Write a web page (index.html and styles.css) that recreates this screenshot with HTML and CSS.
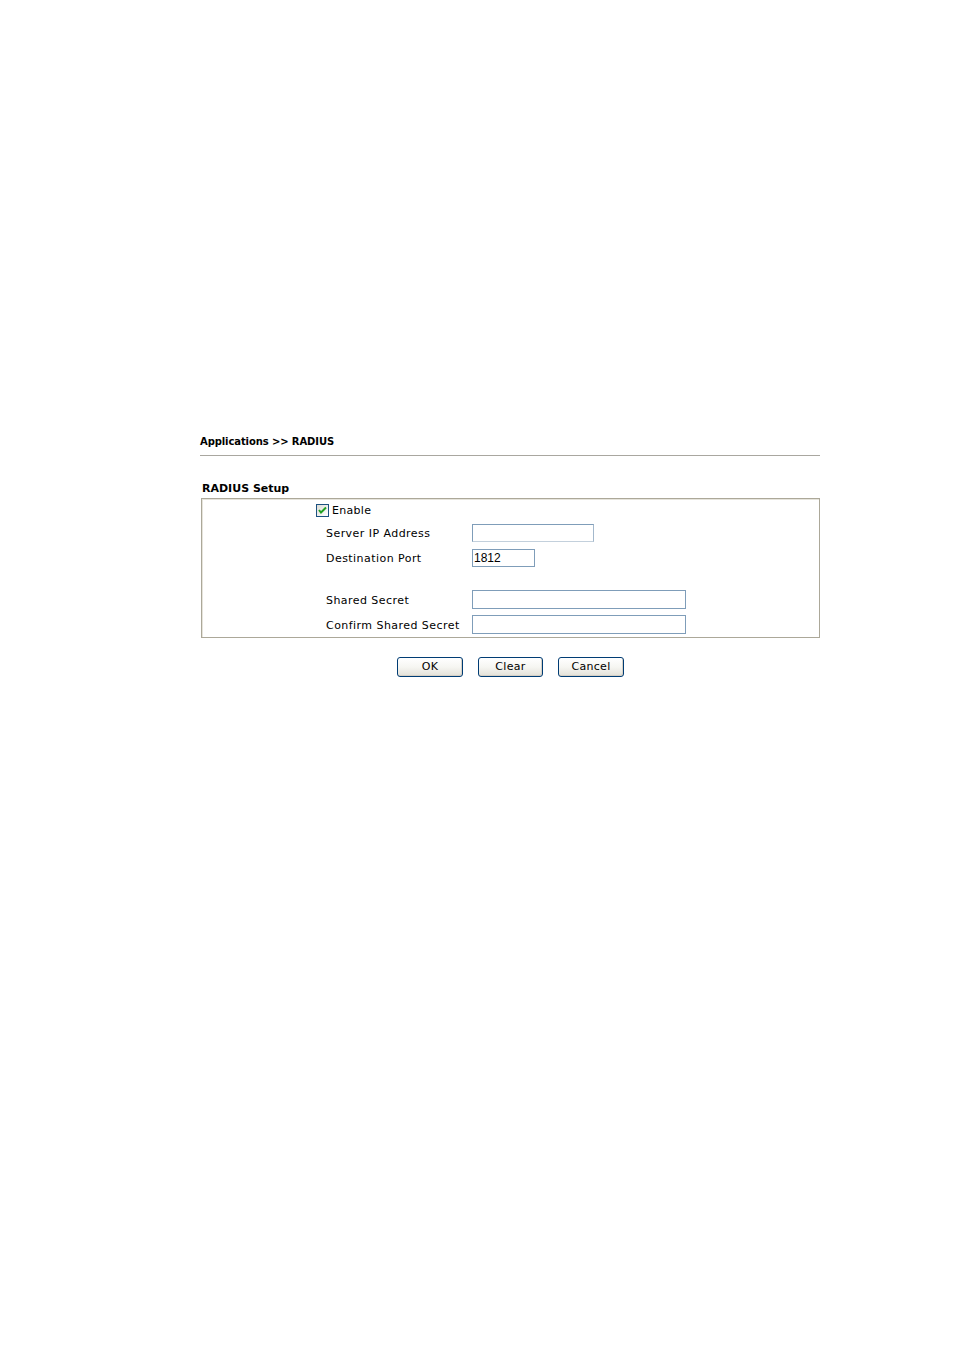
FILE: index.html
```html
<!DOCTYPE html>
<html lang="en">
<head>
<meta charset="utf-8">
<title>Applications &gt;&gt; RADIUS</title>
<link rel="stylesheet" href="styles.css">
</head>
<body>
<div class="page">
  <div class="title">Applications &gt;&gt; RADIUS</div>
  <div class="rule"></div>
  <div class="section">RADIUS Setup</div>
  <div class="box">
    <div class="row enable-row">
      <span class="check"><svg viewBox="0 0 13 13" width="13" height="13"><path d="M3 6 L5 8.5 L10 3.5" fill="none" stroke="#21a121" stroke-width="2"/></svg></span>
      <span class="enable-label">Enable</span>
    </div>
    <div class="row gap-top">
      <span class="label">Server IP Address</span>
      <span class="input w-ip faded"></span>
    </div>
    <div class="row">
      <span class="label">Destination Port</span>
      <span class="input w-port">1812</span>
    </div>
    <div class="spacer"></div>
    <div class="row">
      <span class="label">Shared Secret</span>
      <span class="input w-secret tall"></span>
    </div>
    <div class="row">
      <span class="label">Confirm Shared Secret</span>
      <span class="input w-secret tall"></span>
    </div>
  </div>
  <div class="buttons">
    <span class="btn w66">OK</span>
    <span class="btn w65">Clear</span>
    <span class="btn w66">Cancel</span>
  </div>
</div>
</body>
</html>
```

FILE: styles.css
```css
html, body {
  margin: 0;
  padding: 0;
  background: #ffffff;
}
body {
  font-family: "DejaVu Sans", Tahoma, sans-serif;
  color: #000000;
}
.page {
  padding: 434px 0 0 200px;
  width: 620px;
}
.title {
  font-family: "DejaVu Sans", Tahoma, sans-serif;
  font-weight: bold;
  font-size: 10px;
  line-height: 16px;
  height: 16px;
  letter-spacing: -0.1px;
}
.rule {
  margin-top: 5px;
  border-top: 1px solid #a9a7a0;
  height: 0;
}
.section {
  margin-top: 26px;
  padding-left: 2px;
  font-weight: bold;
  font-size: 11px;
  line-height: 14px;
  height: 14px;
}
.box {
  margin-top: 2px;
  margin-left: 1px;
  width: 619px;
  border: 1px solid #aca899;
  box-shadow: inset 1px 1px 0 #e6e4dc;
  padding: 4px 0 0 124px;
  box-sizing: border-box;
  height: 140px;
  font-size: 11px;
}
.row {
  display: flex;
  align-items: center;
  height: 25px;
}
.enable-row {
  height: 15px;
  margin-left: -10px;
}
.gap-top {
  margin-top: 2px;
}
.spacer {
  height: 17px;
}
.check {
  display: inline-block;
  width: 11px;
  height: 11px;
  border: 1px solid #1c5180;
  background: linear-gradient(135deg, #dcdcd6, #ffffff);
  position: relative;
}
.check svg {
  position: absolute;
  left: -1px;
  top: -1px;
}
.enable-label {
  margin-left: 3px;
  letter-spacing: 0.3px;
}
.label {
  width: 146px;
  letter-spacing: 0.45px;
  white-space: nowrap;
  position: relative;
  top: 0.5px;
}
.input {
  display: inline-block;
  box-sizing: border-box;
  height: 18px;
  border: 1px solid #7f9db9;
  background: #ffffff;
  font-family: "Liberation Sans", Arial, sans-serif;
  font-size: 12px;
  line-height: 16px;
  padding-left: 1px;
}
.tall { height: 19px; }
.faded {
  border-bottom-color: #c3d0dc;
  border-right-color: #a3b8cc;
}
.w-ip { width: 122px; }
.w-port { width: 63px; }
.w-secret { width: 214px; }
.buttons {
  display: flex;
  justify-content: center;
  gap: 15px;
  margin-top: 19px;
  padding-left: 1px;
}
.btn {
  box-sizing: border-box;
  height: 20px;
  border: 1px solid #003c74;
  border-radius: 3px;
  background: linear-gradient(#ffffff 0%, #f6f6f2 50%, #e3e1d8 100%);
  box-shadow: inset -1px -1px 0 #d6d0c5;
  font-size: 11px;
  line-height: 18px;
  text-align: center;
  letter-spacing: 0.3px;
}
.w66 { width: 66px; }
.w65 { width: 65px; }
```
